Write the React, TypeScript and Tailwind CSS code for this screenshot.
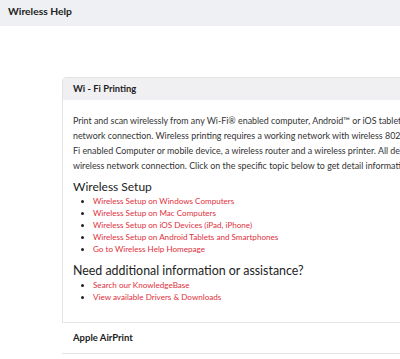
const setupLinks = [
  "Wireless Setup on Windows Computers",
  "Wireless Setup on Mac Computers",
  "Wireless Setup on iOS Devices (iPad, iPhone)",
  "Wireless Setup on Android Tablets and Smartphones",
  "Go to Wireless Help Homepage",
];

const helpLinks = ["Search our KnowledgeBase", "View available Drivers & Downloads"];

function LinkList({ items }: { items: string[] }) {
  return (
    <ul className="list-disc pl-[20px] marker:text-[#222]">
      {items.map((item) => (
        <li key={item} className="text-[8.1px] leading-[12px] text-[#e0303c]">
          <a href="#">{item}</a>
        </li>
      ))}
    </ul>
  );
}

export default function App() {
  return (
    <div className="w-[400px] h-[359px] overflow-hidden bg-white font-['Lato','Liberation_Sans',sans-serif] text-[#222]">
      {/* Page title bar */}
      <div className="h-[26px] bg-[#eff0f3] px-2 flex items-center">
        <h1 className="text-[10.3px] font-bold leading-none pb-[4px]">Wireless Help</h1>
      </div>

      <div className="pl-[62px] pt-[51px]">
        <div className="w-[600px]">
          {/* Wi-Fi Printing card */}
          <div className="border border-[#e4e4e4] rounded-tl-[4px]">
            <div className="h-[22px] bg-[#f0f0f3] px-[10px] flex items-center">
              <h2 className="text-[9.4px] font-bold">Wi - Fi Printing</h2>
            </div>
            <div className="px-[10px] pt-[13px] pb-[19px]">
              <p className="text-[8.9px] leading-[15px] text-[#333] whitespace-nowrap">
                Print and scan wirelessly from any Wi-Fi® enabled computer, Android™ or iOS tablet or smartphone with a
                <br />
                network connection. Wireless printing requires a working network with wireless 802.11 b/g/n capability, a Wi-
                <br />
                Fi enabled Computer or mobile device, a wireless router and a wireless printer. All devices must be on the same
                <br />
                wireless network connection. Click on the specific topic below to get detail information.
              </p>
              <h3 className="mt-[6px] text-[12px] leading-[16px]">Wireless Setup</h3>
              <LinkList items={setupLinks} />
              <h3 className="mt-[8px] text-[12.4px] leading-[16px]">
                Need additional information or assistance?
              </h3>
              <LinkList items={helpLinks} />
            </div>
          </div>

          {/* Apple AirPrint row */}
          <div className="h-[31px] border-b border-[#e4e4e4] px-[11px] flex items-center">
            <h2 className="text-[9.5px] font-bold">Apple AirPrint</h2>
          </div>
        </div>
      </div>
    </div>
  );
}
